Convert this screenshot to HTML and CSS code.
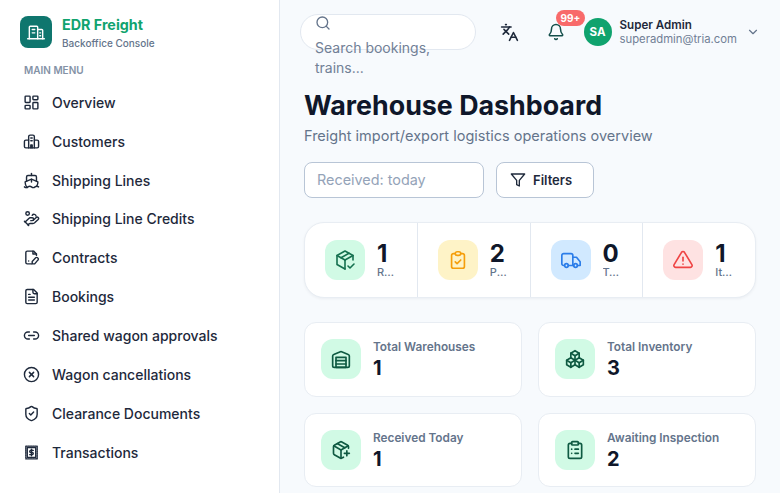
FILE: index.html
```html
<!DOCTYPE html>
<html lang="en">
<head>
    <meta charset="UTF-8">
    <meta name="viewport" content="width=device-width, initial-scale=1.0">
    <title>EDR Freight</title>
    <link rel="stylesheet" href="styles.css">
</head>
<body>
    <div class="app">
        <aside class="sidebar">
            <div class="brand">
                <div class="brand-logo">
                    <svg class="icon-logo" viewBox="0 0 24 24"><path d="M2 20h20"/><path d="M4 20V6a1 1 0 0 1 1-1h8a1 1 0 0 1 1 1v14"/><path d="M14 9h5a1 1 0 0 1 1 1v10"/><path d="M7.500 9h3M7.500 13h3M16.500 13h1M16.500 16.500h1"/></svg>
                </div>
                <div>
                    <div class="brand-name">EDR Freight</div>
                    <div class="brand-sub">Backoffice Console</div>
                </div>
            </div>
            <div class="menu-label">MAIN MENU</div>
            <nav class="menu">
                <a class="menu-item"><svg class="icon-nav" viewBox="0 0 24 24"><rect x="3" y="3" width="7" height="9" rx="1"/><rect x="14" y="3" width="7" height="5" rx="1"/><rect x="14" y="12" width="7" height="9" rx="1"/><rect x="3" y="16" width="7" height="5" rx="1"/></svg>Overview</a>
                <a class="menu-item"><svg class="icon-nav" viewBox="0 0 24 24"><path d="M8 21V5a2 2 0 0 1 2-2h4a2 2 0 0 1 2 2v16"/><path d="M8 10H4a2 2 0 0 0-2 2v7a2 2 0 0 0 2 2h16a2 2 0 0 0 2-2v-7a2 2 0 0 0-2-2h-4"/><path d="M11 21v-4h2v4"/><path d="M11 7h2M11 11h2"/></svg>Customers</a>
                <a class="menu-item"><svg class="icon-nav" viewBox="0 0 24 24"><path d="M12 10.200V14"/><path d="M12 2v3"/><path d="M19 13V7a2 2 0 0 0-2-2H7a2 2 0 0 0-2 2v6"/><path d="M19.400 20A11.600 11.600 0 0 0 21 14l-8.200-3.600a2 2 0 0 0-1.600 0L3 14a11.600 11.600 0 0 0 2.800 7.800"/><path d="M2 21c.6.500 1.200 1 2.500 1 2.500 0 2.500-2 5-2 1.300 0 1.900.500 2.500 1s1.200 1 2.500 1c2.500 0 2.500-2 5-2 1.300 0 1.900.500 2.500 1"/></svg>Shipping Lines</a>
                <a class="menu-item"><svg class="icon-nav" viewBox="0 0 24 24"><circle cx="6.500" cy="5" r="2.500"/><path d="M11 15h2a2 2 0 1 0 0-4h-3c-.6 0-1.100.2-1.400.6L3 17"/><path d="m7 21 1.600-1.400c.3-.4.8-.6 1.400-.6h4c1.100 0 2.100-.4 2.800-1.200l4.600-4.400a2 2 0 0 0-2.750-2.900l-4.200 3.900"/><path d="m2 16 6 6"/><path d="M13 7.500a3 3 0 0 1 5.500 1"/></svg>Shipping Line Credits</a>
                <a class="menu-item"><svg class="icon-nav" viewBox="0 0 24 24"><path d="M19 9V7l-4-4H6a2 2 0 0 0-2 2v14a2 2 0 0 0 2 2h6"/><path d="M14 3v4h5"/><path d="M20.600 12.400a1.900 1.900 0 0 0-2.700 0L13 17.500V21h3.500l4.100-5a2 2 0 0 0 0-3.600z"/><path d="M8 17h.01"/></svg>Contracts</a>
                <a class="menu-item"><svg class="icon-nav" viewBox="0 0 24 24"><path d="M15 2H6a2 2 0 0 0-2 2v16a2 2 0 0 0 2 2h12a2 2 0 0 0 2-2V7Z"/><path d="M14 2v4a2 2 0 0 0 2 2h4"/><path d="M10 9H8"/><path d="M16 13H8"/><path d="M16 17H8"/></svg>Bookings</a>
                <a class="menu-item"><svg class="icon-nav" viewBox="0 0 24 24"><path d="M9 17H7A5 5 0 0 1 7 7h2"/><path d="M15 7h2a5 5 0 1 1 0 10h-2"/><path d="M8 12h8"/></svg>Shared wagon approvals</a>
                <a class="menu-item"><svg class="icon-nav" viewBox="0 0 24 24"><circle cx="12" cy="12" r="10"/><path d="m15 9-6 6"/><path d="m9 9 6 6"/></svg>Wagon cancellations</a>
                <a class="menu-item"><svg class="icon-nav" viewBox="0 0 24 24"><path d="M20 13c0 5-3.500 7.500-7.700 9a1 1 0 0 1-.6 0C7.500 20.500 4 18 4 13V6a1 1 0 0 1 1-1c2 0 4.500-1.200 6.200-2.700a1.200 1.200 0 0 1 1.600 0C14.500 3.800 17 5 19 5a1 1 0 0 1 1 1z"/><path d="m9 12 2 2 4-4"/></svg>Clearance Documents</a>
                <a class="menu-item"><svg class="icon-nav" viewBox="0 0 24 24"><path d="M4 3h16v18H4z" stroke-dasharray="2 1.200"/><path d="M6 5h12v14H6z"/><path d="M14.500 9H11a1.500 1.500 0 0 0 0 3h2a1.500 1.500 0 0 1 0 3H9.500"/><path d="M12 7.500v9"/></svg>Transactions</a>
            </nav>
        </aside>

        <main class="main">
            <header class="topbar">
                <div class="search">
                    <svg class="icon-search" viewBox="0 0 24 24"><circle cx="11" cy="11" r="8"/><path d="m21 21-4.300-4.300"/></svg>
                    <span class="search-text">Search bookings, trains...</span>
                </div>
                <div class="topbar-right">
                    <svg class="icon-lang" viewBox="0 0 24 24"><path d="m5 8 6 6"/><path d="m4 14 6-6 2-3"/><path d="M2 5h12"/><path d="M7 2h1"/><path d="m22 22-5-10-5 10"/><path d="M14 18h6"/></svg>
                    <div class="bell">
                        <svg class="icon-bell" viewBox="0 0 24 24"><path d="M10.300 21a2 2 0 0 0 3.400 0"/><path d="M3.300 15.300A1 1 0 0 0 4 17h16a1 1 0 0 0 .7-1.700C19.400 14 18 12.500 18 8A6 6 0 0 0 6 8c0 4.500-1.400 6-2.700 7.300"/></svg>
                        <span class="badge">99+</span>
                    </div>
                    <div class="avatar">SA</div>
                    <div class="user">
                        <div class="user-name">Super Admin</div>
                        <div class="user-mail">superadmin@tria.com</div>
                    </div>
                    <svg class="icon-chevron" viewBox="0 0 24 24"><path d="m6 9 6 6 6-6"/></svg>
                </div>
            </header>

            <section class="content">
                <h1>Warehouse Dashboard</h1>
                <p class="subtitle">Freight import/export logistics operations overview</p>

                <div class="filters">
                    <input class="date-input" type="text" placeholder="Received: today">
                    <button class="filter-btn" type="button">
                        <svg class="icon-filter" viewBox="0 0 24 24"><path d="M22 3H2l8 9.500V19l4 2v-8.500z"/></svg>
                        Filters
                    </button>
                </div>

                <div class="stats">
                    <div class="stat">
                        <div class="tile tile-green"><svg class="icon-tile icon-tile-lg" viewBox="0 0 24 24"><path d="M12 21l-8-4.500v-9L12 3l8 4.500v4.500"/><path d="M12 12l8-4.500"/><path d="M12 12v9"/><path d="M12 12 4 7.500"/><path d="M16 5.250l-8 4.500"/><path d="m15 18 2 2 4-4"/></svg></div>
                        <div class="stat-text"><div class="stat-value">1</div><div class="stat-label">Received Today</div></div>
                    </div>
                    <div class="stat">
                        <div class="tile tile-amber"><svg class="icon-tile" viewBox="0 0 24 24"><path d="M9 5H7a2 2 0 0 0-2 2v12a2 2 0 0 0 2 2h10a2 2 0 0 0 2-2V7a2 2 0 0 0-2-2h-2"/><rect x="9" y="3" width="6" height="4" rx="2"/><path d="m9 14 2 2 4-4"/></svg></div>
                        <div class="stat-text"><div class="stat-value">2</div><div class="stat-label">Pending Inspection</div></div>
                    </div>
                    <div class="stat">
                        <div class="tile tile-blue"><svg class="icon-tile" viewBox="0 0 24 24"><circle cx="7" cy="18" r="2"/><circle cx="17" cy="18" r="2"/><path d="M5 18H4a2 2 0 0 1-2-2V7a2 2 0 0 1 2-2h8a2 2 0 0 1 2 2v11"/><path d="M9 18h6"/><path d="M14 9h4l4 5v4h-3"/></svg></div>
                        <div class="stat-text"><div class="stat-value">0</div><div class="stat-label">Trucks Waiting</div></div>
                    </div>
                    <div class="stat">
                        <div class="tile tile-red"><svg class="icon-tile" viewBox="0 0 24 24"><path d="M12 9v4"/><path d="M10.400 3.600 2.300 17.100a1.900 1.900 0 0 0 1.600 2.900h16.200a1.900 1.900 0 0 0 1.600-2.900L13.600 3.600a1.900 1.900 0 0 0-3.200 0z"/><path d="M12 16.500h.01"/></svg></div>
                        <div class="stat-text"><div class="stat-value">1</div><div class="stat-label">Items Flagged</div></div>
                    </div>
                </div>

                <div class="cards">
                    <div class="card">
                        <div class="tile tile-green"><svg class="icon-card" viewBox="0 0 24 24"><path d="M22 8.400V20a2 2 0 0 1-2 2H4a2 2 0 0 1-2-2V8.400a2 2 0 0 1 1.300-1.900l8-3.200a2 2 0 0 1 1.400 0l8 3.200A2 2 0 0 1 22 8.400Z"/><path d="M6 18h12"/><path d="M6 14h12"/><rect x="6" y="10" width="12" height="12"/></svg></div>
                        <div class="card-text"><div class="card-label">Total Warehouses</div><div class="card-value">1</div></div>
                    </div>
                    <div class="card">
                        <div class="tile tile-green"><svg class="icon-card" viewBox="0 0 24 24"><path d="m7 16.500-5-3 5-3 5 3v5.500l-5 3z"/><path d="M2 13.500V19l5 3"/><path d="m7 16.500 5-3"/><path d="m17 16.500-5-3 5-3 5 3V19l-5 3z"/><path d="m12 19 5 3"/><path d="m17 16.500 5-3"/><path d="M12 13.500V8L7 5l5-3 5 3v5.500"/><path d="M7 5v5.500"/><path d="m12 8 5-3"/></svg></div>
                        <div class="card-text"><div class="card-label">Total Inventory</div><div class="card-value">3</div></div>
                    </div>
                    <div class="card">
                        <div class="tile tile-green"><svg class="icon-card" viewBox="0 0 24 24"><path d="M16 16h6"/><path d="M19 13v6"/><path d="M21 10V8a2 2 0 0 0-1-1.700l-7-4a2 2 0 0 0-2 0l-7 4A2 2 0 0 0 3 8v8a2 2 0 0 0 1 1.700l7 4a2 2 0 0 0 2 0l2-1.100"/><path d="m7.500 4.300 9 5.100"/><path d="M3.300 7 12 12l8.700-5"/><path d="M12 22V12"/></svg></div>
                        <div class="card-text"><div class="card-label">Received Today</div><div class="card-value">1</div></div>
                    </div>
                    <div class="card">
                        <div class="tile tile-green"><svg class="icon-card" viewBox="0 0 24 24"><rect x="8" y="2" width="8" height="4" rx="1"/><path d="M16 4h2a2 2 0 0 1 2 2v14a2 2 0 0 1-2 2H6a2 2 0 0 1-2-2V6a2 2 0 0 1 2-2h2"/><path d="M12 11h4"/><path d="M12 16h4"/><path d="M8 11h.01"/><path d="M8 16h.01"/></svg></div>
                        <div class="card-text"><div class="card-label">Awaiting Inspection</div><div class="card-value">2</div></div>
                    </div>
                </div>
            </section>
        </main>
    </div>
</body>
</html>
```

FILE: styles.css
```css
html, body {
    height: 100%;
}

body {
    margin: 0;
    background-color: #f7fafd;
    color: #0f172a;
    font-family: "Inter", "Liberation Sans", sans-serif;
    overflow: hidden;
}

svg {
    fill: none;
    stroke: currentColor;
    stroke-width: 2;
    stroke-linecap: round;
    stroke-linejoin: round;
    flex-shrink: 0;
}

.app {
    display: flex;
    height: 493px;
}

/* sidebar */
.sidebar {
    width: 280px;
    box-sizing: border-box;
    flex-shrink: 0;
    padding: 16px 20px 0;
    background-color: #ffffff;
    border-right: 1px solid #e2e8f0;
}

.brand {
    display: flex;
    align-items: center;
    gap: 10px;
    height: 32px;
}

.brand-logo {
    display: flex;
    align-items: center;
    justify-content: center;
    width: 32px;
    height: 32px;
    border-radius: 8px;
    background-color: #0f766e;
    color: #ffffff;
}

.icon-logo {
    width: 20px;
    height: 20px;
    stroke-width: 1.7;
}

.brand-name {
    font-size: 14.3px;
    font-weight: 700;
    line-height: 18px;
    color: #10a36e;
}

.brand-sub {
    margin-top: 3px;
    font-size: 10px;
    font-weight: 500;
    line-height: 12px;
    color: #64748b;
}

.menu-label {
    margin-top: 15px;
    padding-left: 4px;
    font-size: 10px;
    font-weight: 600;
    line-height: 14px;
    color: #8492a6;
}

.menu {
    margin-top: 5.8px;
}

.menu-item {
    display: flex;
    align-items: center;
    gap: 12px;
    height: 38.9px;
    padding-left: 3px;
    font-size: 14px;
    font-weight: 500;
    color: #1e293b;
}

.icon-nav {
    width: 17px;
    height: 17px;
    color: #1e293b;
}

/* top bar */
.main {
    flex: 1;
    min-width: 0;
}

.topbar {
    display: flex;
    align-items: center;
    justify-content: space-between;
    height: 64px;
    padding: 0 20px 0 20px;
}

.search {
    display: flex;
    flex-direction: column;
    box-sizing: border-box;
    width: 176px;
    height: 36px;
    padding: 0 14px;
    background-color: #ffffff;
    border: 1px solid #e2e8f0;
    border-radius: 18px;
}

.icon-search {
    width: 16px;
    height: 16px;
    color: #64748b;
}

.search-text {
    margin-top: 7px;
    font-size: 14px;
    line-height: 20px;
    color: #718096;
}

.topbar-right {
    display: flex;
    align-items: center;
}

.icon-lang {
    width: 19px;
    height: 19px;
    margin-right: 28px;
    color: #1e293b;
}

.bell {
    position: relative;
    display: flex;
    margin-right: 19px;
}

.icon-bell {
    width: 18px;
    height: 18px;
    color: #134e4a;
}

.badge {
    position: absolute;
    top: -13px;
    left: 9px;
    padding: 0 5px;
    font-size: 10px;
    font-weight: 700;
    line-height: 16px;
    color: #ffffff;
    background-color: #f86a6a;
    border-radius: 8px;
}

.avatar {
    display: flex;
    align-items: center;
    justify-content: center;
    width: 28px;
    height: 28px;
    border-radius: 50%;
    background-color: #10a36e;
    color: #ffffff;
    font-size: 11.5px;
    font-weight: 700;
}

.user {
    margin: 0 9px 0 8px;
}

.user-name {
    font-size: 11.6px;
    font-weight: 600;
    line-height: 14px;
    color: #1e293b;
}

.user-mail {
    font-size: 11.3px;
    line-height: 14px;
    color: #718096;
}

.icon-chevron {
    width: 14px;
    height: 14px;
    color: #64748b;
}

/* page content */
.content {
    padding: 23px 24px 0;
}

h1 {
    margin: 0;
    font-size: 26.8px;
    font-weight: 700;
    line-height: 36px;
    color: #0f172a;
}

.subtitle {
    margin: 3px 0 0;
    font-size: 14.5px;
    line-height: 20px;
    color: #64748b;
}

.filters {
    display: flex;
    gap: 12px;
    margin-top: 16px;
}

.date-input {
    box-sizing: border-box;
    width: 180px;
    height: 36px;
    padding: 0 12px 2px;
    background-color: #ffffff;
    border: 1px solid #b8c5d6;
    border-radius: 8px;
    font-family: inherit;
    font-size: 14.4px;
}

.date-input::placeholder {
    color: #94a3b8;
}

.filter-btn {
    display: flex;
    align-items: center;
    gap: 7px;
    box-sizing: border-box;
    width: 98px;
    height: 36px;
    padding: 0 0 0 13px;
    background-color: #ffffff;
    border: 1px solid #b8c5d6;
    border-radius: 8px;
    font-family: inherit;
    font-size: 13px;
    font-weight: 600;
    color: #1e293b;
}

.icon-filter {
    width: 16px;
    height: 16px;
}

.stats {
    display: flex;
    margin-top: 24px;
    background-color: #ffffff;
    border: 1px solid #e8edf3;
    border-radius: 20px;
    box-shadow: 0 1px 3px rgba(15, 23, 42, 0.05);
}

.stat {
    flex: 1 1 0;
    min-width: 0;
    display: flex;
    align-items: center;
    gap: 12px;
    height: 74px;
    padding: 0 20px;
    border-right: 1px solid #e2e8f0;
}

.stat:last-child {
    border-right: none;
}

.stat-text {
    flex: 1;
    min-width: 0;
}

.stat-value {
    font-size: 24px;
    font-weight: 700;
    line-height: 24px;
}

.stat-label {
    font-size: 11px;
    font-weight: 500;
    line-height: 13px;
    color: #64748b;
    white-space: nowrap;
    overflow: hidden;
    text-overflow: ellipsis;
}

.tile {
    display: flex;
    align-items: center;
    justify-content: center;
    flex-shrink: 0;
    width: 40px;
    height: 40px;
    border-radius: 12px;
}

.tile-green { background-color: #d1fae5; color: #15704f; }
.tile-amber { background-color: #fef3c7; color: #f59e0b; }
.tile-blue { background-color: #d1e9ff; color: #2b7de9; }
.tile-red { background-color: #fee2e2; color: #ef4444; }

.icon-tile {
    width: 22px;
    height: 22px;
    stroke-width: 1.8;
}

.icon-tile-lg {
    width: 24px;
    height: 24px;
    stroke-width: 1.6;
}

.icon-card {
    width: 20px;
    height: 20px;
    color: #0f5a42;
}

.cards {
    display: grid;
    grid-template-columns: 1fr 1fr;
    gap: 16px;
    margin-top: 24px;
}

.card {
    display: flex;
    align-items: center;
    gap: 12px;
    box-sizing: border-box;
    height: 74.5px;
    padding: 0 16px;
    background-color: #ffffff;
    border: 1px solid #e8edf3;
    border-radius: 12px;
}

.card-text {
    padding-top: 2px;
}

.card-label {
    font-size: 11.8px;
    font-weight: 600;
    line-height: 16px;
    color: #64748b;
}

.card-value {
    margin: 1px 0;
    font-size: 20px;
    font-weight: 700;
    line-height: 24px;
}
```
